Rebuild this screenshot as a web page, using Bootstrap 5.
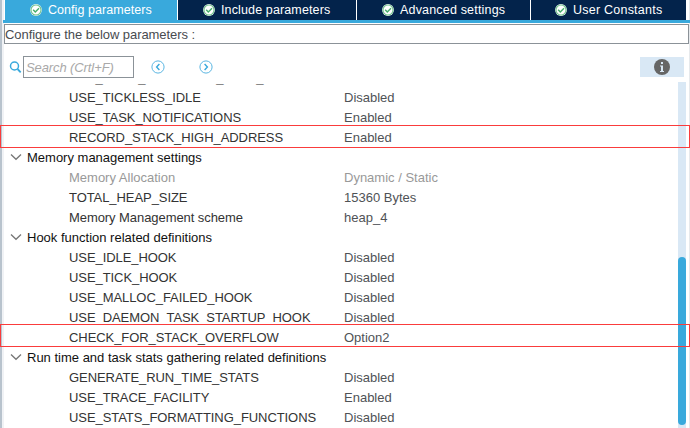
<!DOCTYPE html>
<html lang="en">
<head>
<meta charset="utf-8">
<title>Config parameters</title>
<link href="https://cdn.jsdelivr.net/npm/bootstrap@5.3.0/dist/css/bootstrap.min.css" rel="stylesheet">
<style>
body{width:690px;height:428px;font:13px/20px "Liberation Sans",Arial,sans-serif;color:#333;background:#fff}
.panel{height:428px;border-left:2px solid #b8c3cd;padding-left:1px;box-shadow:inset 2px 0 #f0f2f5,inset -1px 0 #e6e9ec}
.tabs{height:23px;border-bottom:3px solid #39a9dc;padding-left:2px}
.tabs .nav-link{height:20px;padding:0;background:#03234b;color:#fff;border-radius:0;font-size:12.5px;line-height:18px}
.tabs .nav-link.active{background:#39a9dc}
.tabs svg{margin-right:6px;margin-top:-1px}
.tabs .t1{width:172px;padding-left:25px;letter-spacing:.05px}
.tabs .t2{width:179px;padding-left:25px;letter-spacing:.13px}
.tabs .t3{width:174px;padding-left:25px;letter-spacing:.18px}
.tabs .t4{width:156px;padding-left:24px;letter-spacing:.23px}
.caption-box{height:20px;margin:1px 1px 0;border:1px solid #8b9298;line-height:20px;color:#484b50;letter-spacing:-.07px}
.tools{height:38px;padding:12px 6px 0}
.search{width:111px;height:22px;margin-left:1px;border:1px solid #8b9298;border-radius:0;padding:0 2px;font-size:13px;line-height:20px;letter-spacing:-.1px;font-style:italic;color:#333}
.search::placeholder{color:#a9a9a9;opacity:1}
.arrow-l{margin-left:17px}
.arrow-r{margin-left:34px}
.info{width:44px;height:20px;margin-top:1px;background:#d9e8f5}
.list,.clip,.track{height:346px}
.rows{margin-top:-14px}
.prow{height:20px;line-height:20px}
.first-row{clip-path:inset(15px 0 0 0);color:#777}
.pname{width:275px;margin-left:66px;white-space:nowrap;letter-spacing:-.07px}
.pval{color:#4f5256}
.off,.off .pval{color:#999}
.off .pname{letter-spacing:0}
.group-row{color:#111;padding-left:7px}
.group-row svg{margin-right:5px;margin-top:-2px}
.mark-box{left:-3px;width:690px;top:-3px;height:23px;border:1px solid #fa3c3c;z-index:2}
.mark-box.raised{top:-4px}
.track{width:8px;background:#d9e8f5;margin-right:4px;padding-top:175px}
.thumb{height:168px;border-radius:4px;background:#39a9dc}
</style>
<script src="https://cdn.jsdelivr.net/npm/bootstrap@5.3.0/dist/js/bootstrap.bundle.min.js"></script>
</head>
<body class="overflow-hidden">
<svg class="d-none">
<symbol id="ok" viewBox="0 0 12 12"><circle cx="6" cy="6" r="5.9" fill="#fff"/><circle cx="6" cy="6" r="5" fill="#fff" stroke="#6cc088" stroke-width="1.1"/><path d="M3.2 5.8 5.3 8 9 4.2" fill="none" stroke="#45ad6b" stroke-width="1.4"/></symbol>
<symbol id="down" viewBox="0 0 12 8"><path d="M1 1.5 6 6.3 11 1.5" fill="none" stroke="#777" stroke-width="1.3"/></symbol>
</svg>
<main class="panel">
<nav class="nav tabs flex-nowrap">
<a class="nav-link active t1 d-flex align-items-center"><svg width="12" height="12"><use href="#ok"/></svg><span>Config parameters</span></a>
<a class="nav-link t2 d-flex align-items-center border-start border-white"><svg width="12" height="12"><use href="#ok"/></svg><span>Include parameters</span></a>
<a class="nav-link t3 d-flex align-items-center border-start border-white"><svg width="12" height="12"><use href="#ok"/></svg><span>Advanced settings</span></a>
<a class="nav-link t4 d-flex align-items-center border-start border-white"><svg width="12" height="12"><use href="#ok"/></svg><span>User Constants</span></a>
</nav>
<div class="caption-box">Configure the below parameters :</div>
<div class="tools d-flex align-items-start">
<svg class="mt-1" width="13" height="14" viewBox="0 0 13 14"><circle cx="5.5" cy="6" r="4" fill="none" stroke="#39a9dc" stroke-width="1.5"/><path d="m8.5 9 3.2 3.3" stroke="#39a9dc" stroke-width="1.8"/></svg>
<input class="search" placeholder="Search (Crtl+F)">
<svg class="arrow-l" width="14" height="22" viewBox="0 0 14 22"><circle cx="7" cy="11" r="6.1" fill="none" stroke="#5bb6e2"/><path d="M8.4 8 5.6 11l2.8 3" fill="none" stroke="#39a9dc" stroke-width="1.4"/></svg>
<svg class="arrow-r" width="14" height="22" viewBox="0 0 14 22"><circle cx="7" cy="11" r="6.1" fill="none" stroke="#5bb6e2"/><path d="M5.6 8l2.8 3-2.8 3" fill="none" stroke="#39a9dc" stroke-width="1.4"/></svg>
<div class="info ms-auto d-flex justify-content-center align-items-center"><svg width="16" height="16" viewBox="0 0 16 16"><circle cx="8" cy="8" r="8" fill="#666"/><path d="M7 3h2v2H7zM6 6.5h3V12h1v1H6v-1h1V7.5H6z" fill="#d9e8f5"/></svg></div>
</div>
<section class="list d-flex">
<div class="clip flex-grow-1">
<div class="rows">
<div class="prow d-flex first-row"><div class="pname">USE_PORT_OPTIMISED_TASK_SELECTION</div></div>
<div class="prow d-flex"><div class="pname">USE_TICKLESS_IDLE</div><div class="pval">Disabled</div></div>
<div class="prow d-flex"><div class="pname">USE_TASK_NOTIFICATIONS</div><div class="pval">Enabled</div></div>
<div class="prow d-flex position-relative"><div class="mark-box position-absolute"></div><div class="pname">RECORD_STACK_HIGH_ADDRESS</div><div class="pval">Enabled</div></div>
<div class="prow d-flex align-items-center group-row"><svg width="12" height="8"><use href="#down"/></svg><span>Memory management settings</span></div>
<div class="prow d-flex off"><div class="pname">Memory Allocation</div><div class="pval">Dynamic / Static</div></div>
<div class="prow d-flex"><div class="pname">TOTAL_HEAP_SIZE</div><div class="pval">15360 Bytes</div></div>
<div class="prow d-flex"><div class="pname">Memory Management scheme</div><div class="pval">heap_4</div></div>
<div class="prow d-flex align-items-center group-row"><svg width="12" height="8"><use href="#down"/></svg><span>Hook function related definitions</span></div>
<div class="prow d-flex"><div class="pname">USE_IDLE_HOOK</div><div class="pval">Disabled</div></div>
<div class="prow d-flex"><div class="pname">USE_TICK_HOOK</div><div class="pval">Disabled</div></div>
<div class="prow d-flex"><div class="pname">USE_MALLOC_FAILED_HOOK</div><div class="pval">Disabled</div></div>
<div class="prow d-flex"><div class="pname">USE_DAEMON_TASK_STARTUP_HOOK</div><div class="pval">Disabled</div></div>
<div class="prow d-flex position-relative"><div class="mark-box raised position-absolute"></div><div class="pname">CHECK_FOR_STACK_OVERFLOW</div><div class="pval">Option2</div></div>
<div class="prow d-flex align-items-center group-row"><svg width="12" height="8"><use href="#down"/></svg><span>Run time and task stats gathering related definitions</span></div>
<div class="prow d-flex"><div class="pname">GENERATE_RUN_TIME_STATS</div><div class="pval">Disabled</div></div>
<div class="prow d-flex"><div class="pname">USE_TRACE_FACILITY</div><div class="pval">Enabled</div></div>
<div class="prow d-flex"><div class="pname">USE_STATS_FORMATTING_FUNCTIONS</div><div class="pval">Disabled</div></div>
</div>
</div>
<div class="track"><div class="thumb"></div></div>
</section>
</main>
</body>
</html>
